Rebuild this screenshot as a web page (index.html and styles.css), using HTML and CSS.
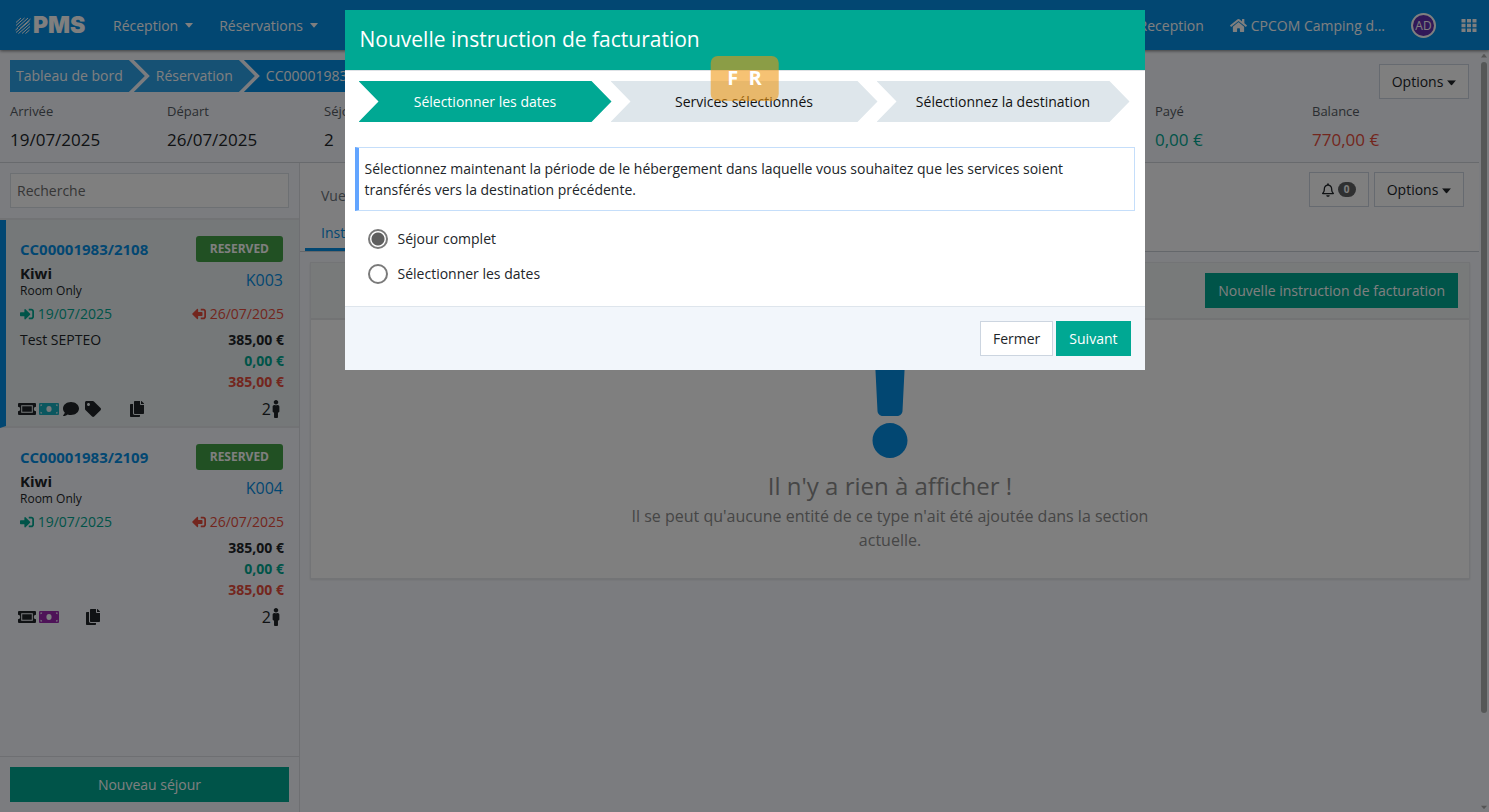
FILE: index.html
```html
<!DOCTYPE html>
<html lang="fr">
<head>
  <meta charset="UTF-8">
  <title>PMS - Instructions de facturation</title>
  <link rel="stylesheet" href="styles.css">
</head>
<body>
  <!-- icons -->
  <svg class="sprite" aria-hidden="true">
    <symbol id="i-home" viewBox="0 0 576 512"><path d="M280.370 148.260L96 300.110V464a16 16 0 0 0 16 16l112.060-.29a16 16 0 0 0 15.920-16V368a16 16 0 0 1 16-16h64a16 16 0 0 1 16 16v95.640a16 16 0 0 0 16 16.050L464 480a16 16 0 0 0 16-16V300L295.670 148.260a12.190 12.190 0 0 0-15.300 0zM571.600 251.470L488 182.560V44.050a12 12 0 0 0-12-12h-56a12 12 0 0 0-12 12v72.610L318.470 43a48 48 0 0 0-61 0L4.340 251.470a12 12 0 0 0-1.600 16.900l25.500 31A12 12 0 0 0 45.150 301l235.220-193.740a12.190 12.190 0 0 1 15.300 0L530.900 301a12 12 0 0 0 16.900-1.600l25.500-31a12 12 0 0 0-1.700-16.930z"/></symbol>
    <symbol id="i-grid" viewBox="0 0 15 13"><path d="M0 0h4v3.500H0zM5.500 0h4v3.500h-4zM11 0h4v3.500h-4zM0 4.700h4v3.500H0zM5.500 4.700h4v3.500h-4zM11 4.700h4v3.500h-4zM0 9.500h4V13H0zM5.500 9.500h4V13h-4zM11 9.500h4V13h-4z"/></symbol>
    <symbol id="i-caret" viewBox="0 0 8 5"><path d="M0 0h8L4.500 4.300q-.5.500-1 0z"/></symbol>
    <symbol id="i-bell" viewBox="0 0 448 512"><path d="M439.390 362.290c-19.320-20.760-55.470-51.990-55.470-154.290 0-77.700-54.480-139.900-127.940-155.160V32c0-17.670-14.320-32-31.980-32s-31.980 14.330-31.980 32v20.840C118.560 68.100 64.080 130.300 64.080 208c0 102.300-36.150 133.530-55.470 154.290-6 6.450-8.660 14.160-8.610 21.710.11 16.400 12.980 32 32.100 32h383.800c19.120 0 32-15.600 32.100-32 .05-7.550-2.610-15.270-8.610-21.710zM67.530 368c21.220-27.970 44.420-74.330 44.530-159.420 0-.2-.06-.38-.06-.58 0-61.860 50.140-112 112-112s112 50.140 112 112c0 .2-.06.38-.06.58.11 85.100 23.310 131.460 44.530 159.420H67.530zM224 512c35.320 0 63.970-28.650 63.970-64H160.030c0 35.350 28.650 64 63.970 64z"/></symbol>
    <symbol id="i-in" viewBox="0 0 512 512"><path d="M416 448h-84c-6.600 0-12-5.400-12-12v-40c0-6.600 5.400-12 12-12h84c17.700 0 32-14.300 32-32V160c0-17.700-14.300-32-32-32h-84c-6.600 0-12-5.400-12-12V76c0-6.600 5.400-12 12-12h84c53 0 96 43 96 96v192c0 53-43 96-96 96zm-47-201L201 79c-15-15-41-4.500-41 17v96H24c-13.300 0-24 10.700-24 24v96c0 13.300 10.700 24 24 24h136v96c0 21.500 26 32 41 17l168-168c9.300-9.400 9.300-24.600 0-34z"/></symbol>
    <symbol id="i-out" viewBox="0 0 512 512"><path transform="matrix(-1 0 0 1 512 0)" d="M497 273L329 441c-15 15-41 4.500-41-17v-96H152c-13.300 0-24-10.700-24-24v-96c0-13.300 10.700-24 24-24h136V88c0-21.400 25.900-32 41-17l168 168c9.300 9.400 9.300 24.600 0 34zM192 436v-40c0-6.600-5.400-12-12-12H96c-17.700 0-32-14.300-32-32V160c0-17.700 14.300-32 32-32h84c6.600 0 12-5.400 12-12V76c0-6.600-5.400-12-12-12H96c-53 0-96 43-96 96v192c0 53 43 96 96 96h84c6.600 0 12-5.400 12-12z"/></symbol>
    <symbol id="i-ticket" viewBox="0 0 18 12"><path fill-rule="evenodd" d="M1 0h16q1 0 1 1v2.800a2.200 2.200 0 0 0 0 4.400V11q0 1-1 1H1q-1 0-1-1V8.200a2.200 2.200 0 0 0 0-4.400V1q0-1 1-1zM3.200 2.200v7.600h11.600V2.200zM4.200 3.200h9.600v5.600H4.200z"/></symbol>
    <symbol id="i-money" viewBox="0 0 20 12"><path fill-rule="evenodd" d="M1 0h18q1 0 1 1v10q0 1-1 1H1q-1 0-1-1V1q0-1 1-1zM10 3a2.600 3 0 1 0 0 6a2.600 3 0 1 0 0-6zM1.500 1.500v1.700A2 2 0 0 0 3.200 1.500zM18.500 1.500h-1.700a2 2 0 0 0 1.700 1.700zM1.500 10.500h1.700A2 2 0 0 0 1.500 8.800zM18.500 10.500V8.800a2 2 0 0 0-1.700 1.700z"/></symbol>
    <symbol id="i-comment" viewBox="0 0 512 512"><path d="M256 32C114.600 32 0 125.100 0 240c0 49.600 21.400 95 57 130.700C44.500 421.100 2.700 466 2.200 466.500c-2.200 2.300-2.800 5.700-1.500 8.700S4.800 480 8 480c66.300 0 116-31.800 140.600-51.400 32.700 12.300 69 19.400 107.400 19.400 141.400 0 256-93.100 256-208S397.400 32 256 32z"/></symbol>
    <symbol id="i-tag" viewBox="0 0 512 512"><path d="M0 252.118V48C0 21.490 21.490 0 48 0h204.118a48 48 0 0 1 33.941 14.059l211.882 211.882c18.745 18.745 18.745 49.137 0 67.882L293.823 497.941c-18.745 18.745-49.137 18.745-67.882 0L14.059 286.059A48 48 0 0 1 0 252.118zM112 64c-26.510 0-48 21.490-48 48s21.490 48 48 48 48-21.490 48-48-21.490-48-48-48z"/></symbol>
    <symbol id="i-copy" viewBox="0 0 448 512"><path d="M320 448v40c0 13.255-10.745 24-24 24H24c-13.255 0-24-10.745-24-24V120c0-13.255 10.745-24 24-24h72v296c0 30.879 25.121 56 56 56h168zm0-344V0H152c-13.255 0-24 10.745-24 24v368c0 13.255 10.745 24 24 24h272c13.255 0 24-10.745 24-24V128H344c-13.200 0-24-10.800-24-24zm120.971-31.029L375.029 7.029A24 24 0 0 0 358.059 0H352v96h96v-6.059a24 24 0 0 0-7.029-16.970z"/></symbol>
    <symbol id="i-male" viewBox="0 0 192 512"><path d="M96 0c35.346 0 64 28.654 64 64s-28.654 64-64 64-64-28.654-64-64S60.654 0 96 0m48 144h-11.360c-22.711 10.443-49.590 10.894-73.280 0H48c-26.510 0-48 21.490-48 48v136c0 13.255 10.745 24 24 24h16v136c0 13.255 10.745 24 24 24h64c13.255 0 24-10.745 24-24V352h16c13.255 0 24-10.745 24-24V192c0-26.510-21.490-48-48-48z"/></symbol>
    <symbol id="i-exclamation" viewBox="0 0 192 512"><path d="M176 432c0 44.112-35.888 80-80 80s-80-35.888-80-80 35.888-80 80-80 80 35.888 80 80zM25.260 25.199l13.600 272C39.499 309.972 50.041 320 62.830 320h66.340c12.789 0 23.331-10.028 23.970-22.801l13.600-272C167.425 11.490 156.496 0 142.770 0H49.230C35.504 0 24.575 11.490 25.260 25.199z"/></symbol>
  </svg>

  <div class="app">
    <nav class="navbar">
      <a class="logo" href="#">
        <svg class="logo-mark" viewBox="0 0 16 17"><path d="M1 5.500L6 1M1 8.500L9.500 1M2.500 10.500L13 1M5 11.500L15.500 2M.5 13L3 11M1 15.500L14.500 4M3.500 16.500L15 6.500M7 16.500L15 9.500M10.500 16.500L14.500 13"/></svg>
        <span>PMS</span>
      </a>
      <a class="nav-link" href="#">Réception <svg class="caret"><use href="#i-caret"/></svg></a>
      <a class="nav-link" href="#">Réservations <svg class="caret"><use href="#i-caret"/></svg></a>
      <div class="nav-right">
        <a class="nav-link" href="#">Reception</a>
        <a class="nav-link hotel" href="#"><svg class="home"><use href="#i-home"/></svg>CPCOM Camping d...</a>
        <a class="avatar" href="#">AD</a>
        <a class="apps" href="#" aria-label="Applications"><svg><use href="#i-grid"/></svg></a>
      </div>
    </nav>

    <div class="page">
      <div class="content">
        <header class="summary">
          <div class="summary-top">
            <div class="breadcrumb">
              <a href="#">Tableau de bord</a>
              <a href="#">Réservation</a>
              <a class="current" href="#">CC00001983</a>
            </div>
            <button class="btn btn-default" type="button">Options <svg class="caret" viewBox="0 0 8 5"><use href="#i-caret"/></svg></button>
          </div>
          <div class="stats">
            <div class="stat"><span>Arrivée</span><strong>19/07/2025</strong></div>
            <div class="stat"><span>Départ</span><strong>26/07/2025</strong></div>
            <div class="stat"><span>Séjours</span><strong>2</strong></div>
            <div class="stat push"><span>Payé</span><strong class="green">0,00 €</strong></div>
            <div class="stat"><span>Balance</span><strong class="red">770,00 €</strong></div>
          </div>
        </header>

        <div class="columns">
          <aside class="sidebar">
            <div class="search"><input type="text" placeholder="Recherche" aria-label="Recherche"></div>

            <article class="stay active">
              <div class="row head"><a class="stay-code" href="#">CC00001983/2108</a><span class="status">RESERVED</span></div>
              <div class="row">
                <div><div class="stay-name">Kiwi</div><div class="stay-board">Room Only</div></div>
                <a class="room" href="#">K003</a>
              </div>
              <div class="row dates">
                <span class="green"><svg><use href="#i-in"/></svg> 19/07/2025</span>
                <span class="red"><svg><use href="#i-out"/></svg> 26/07/2025</span>
              </div>
              <div class="row amounts">
                <span>Test SEPTEO</span>
                <div class="prices"><div>385,00 €</div><div class="green">0,00 €</div><div class="red">385,00 €</div></div>
              </div>
              <div class="row foot">
                <div class="icons">
                  <span><svg class="ticket"><use href="#i-ticket"/></svg></span>
                  <span><svg class="money cyan"><use href="#i-money"/></svg></span>
                  <span><svg><use href="#i-comment"/></svg></span>
                  <span><svg><use href="#i-tag"/></svg></span>
                  <span></span>
                  <span><svg><use href="#i-copy"/></svg></span>
                </div>
                <div class="guests">2<svg><use href="#i-male"/></svg></div>
              </div>
            </article>

            <article class="stay">
              <div class="row head"><a class="stay-code" href="#">CC00001983/2109</a><span class="status">RESERVED</span></div>
              <div class="row">
                <div><div class="stay-name">Kiwi</div><div class="stay-board">Room Only</div></div>
                <a class="room" href="#">K004</a>
              </div>
              <div class="row dates">
                <span class="green"><svg><use href="#i-in"/></svg> 19/07/2025</span>
                <span class="red"><svg><use href="#i-out"/></svg> 26/07/2025</span>
              </div>
              <div class="row amounts">
                <span></span>
                <div class="prices"><div>385,00 €</div><div class="green">0,00 €</div><div class="red">385,00 €</div></div>
              </div>
              <div class="row foot">
                <div class="icons">
                  <span><svg class="ticket"><use href="#i-ticket"/></svg></span>
                  <span><svg class="money purple"><use href="#i-money"/></svg></span>
                  <span></span>
                  <span><svg><use href="#i-copy"/></svg></span>
                </div>
                <div class="guests">2<svg><use href="#i-male"/></svg></div>
              </div>
            </article>

            <div class="sidebar-foot"><button class="btn btn-primary" type="button">Nouveau séjour</button></div>
          </aside>

          <main class="main">
            <div class="tabs-bar">
              <div class="tabs">
                <a href="#">Vue</a>
                <a class="selected" href="#">Instructions</a>
              </div>
              <div class="tools">
                <button class="btn btn-default bell" type="button" aria-label="Notifications"><svg><use href="#i-bell"/></svg><span class="count">0</span></button>
                <button class="btn btn-default" type="button">Options <svg class="caret" viewBox="0 0 8 5"><use href="#i-caret"/></svg></button>
              </div>
            </div>
            <section class="panel">
              <div class="panel-head"><button class="btn btn-primary" type="button">Nouvelle instruction de facturation</button></div>
              <div class="empty">
                <svg><use href="#i-exclamation"/></svg>
                <h2>Il n'y a rien à afficher !</h2>
                <p>Il se peut qu'aucune entité de ce type n'ait été ajoutée dans la section actuelle.</p>
              </div>
            </section>
          </main>
        </div>
      </div>
      <div class="scrollbar">
        <svg viewBox="0 0 8 5"><path d="M0 5h8L4.500.700q-.5-.5-1 0z"/></svg>
        <div class="thumb"></div>
        <svg viewBox="0 0 8 5"><path d="M0 0h8L4.500 4.300q-.5.500-1 0z"/></svg>
      </div>
    </div>
  </div>

  <div class="backdrop">
    <div class="modal" role="dialog" aria-labelledby="modal-title">
      <h1 class="modal-head" id="modal-title">Nouvelle instruction de facturation</h1>
      <div class="modal-body">
        <div class="steps">
          <div class="step done">Sélectionner les dates</div>
          <div class="step">Services sélectionnés</div>
          <div class="step">Sélectionnez la destination</div>
        </div>
        <p class="info">Sélectionnez maintenant la période de le hébergement dans laquelle vous souhaitez que les services soient transférés vers la destination précédente.</p>
        <div class="choices">
          <label><input type="radio" name="period" checked> Séjour complet</label>
          <label><input type="radio" name="period"> Sélectionner les dates</label>
        </div>
      </div>
      <div class="modal-foot">
        <button class="btn btn-default" type="button">Fermer</button>
        <button class="btn btn-primary" type="button">Suivant</button>
      </div>
    </div>
    <div class="lang">F  R</div>
  </div>
</body>
</html>
```
FILE: styles.css
```css
* { box-sizing: border-box; }
body {
  margin: 0;
  font-family: "Open Sans", "Noto Sans", sans-serif;
  font-size: 14px;
  line-height: 21px;
  color: #212529;
}
a { text-decoration: none; color: #058ee4; }
svg { fill: currentColor; flex: none; }
button, input { font: inherit; }
.sprite { display: none; }
.green { color: #00a893; }
.red { color: #e74c3c; }
.caret { width: 8px; height: 5px; }

.app { display: flex; flex-direction: column; height: 100vh; }

/* navbar */
.navbar {
  display: flex;
  align-items: center;
  height: 50px;
  padding: 0 12px 0 15px;
  background: #058ee4;
  box-shadow: 0 1px 3px rgba(0,0,0,0.5);
  z-index: 1;
}
.navbar a { color: #fff; }
.logo {
  display: flex;
  align-items: center;
  gap: 2px;
  width: 98px;
  font: 900 23px Inter, sans-serif;
}
.logo-mark { width: 16px; height: 17px; fill: none; stroke: #fff; stroke-width: 1; }
.nav-link { display: flex; align-items: center; gap: 7px; margin-right: 26px; }
.nav-right { display: flex; align-items: center; margin-left: auto; }
.hotel { gap: 4px; }
.home { width: 17px; height: 15px; }
.avatar {
  width: 25px;
  height: 25px;
  border: 2px solid #fff;
  border-radius: 50%;
  background: #6230b0;
  font-size: 12px;
  text-align: center;
}
.apps { display: flex; margin-left: 25px; }
.apps svg { width: 16px; height: 13px; }

/* buttons */
.btn {
  height: 35px;
  padding: 0 12px;
  border: 1px solid #00a893;
  border-radius: 0;
  cursor: pointer;
  white-space: nowrap;
}
.btn .caret { width: 9px; height: 6px; vertical-align: 1px; }
.btn-default { background: #fff; border-color: #ccd5e0; color: #212529; }
.btn-primary { background: #00a893; color: #fff; }

/* page header */
.page { display: flex; flex: 1; min-height: 0; background: #f7f9fe; }
.content { display: flex; flex-direction: column; flex: 1; min-width: 0; }
.summary { height: 113px; padding: 10px 10px 0; border-bottom: 1px solid #d0d4da; }
.summary-top { display: flex; justify-content: space-between; height: 41px; }
.summary-top .btn { margin-top: 4px; }
.breadcrumb { display: flex; height: 32px; line-height: 32px; }
.breadcrumb a {
  margin-left: -11px;
  padding: 0 22px;
  background: #2ca2e9;
  color: #fff;
  clip-path: polygon(0 0, calc(100% - 16px) 0, 100% 50%, calc(100% - 16px) 100%, 0 100%, 16px 50%);
}
.breadcrumb a:first-child {
  margin-left: 0;
  padding-left: 6px;
  clip-path: polygon(0 0, calc(100% - 16px) 0, 100% 50%, calc(100% - 16px) 100%, 0 100%);
}
.breadcrumb .current { background: #058ee4; }
.stats { display: flex; }
.stat { display: flex; flex-direction: column; width: 157px; }
.stat span { font-size: 13px; color: #555b63; }
.stat strong { font-size: 17px; font-weight: normal; line-height: 36px; }
.push { margin-left: auto; }

/* sidebar */
.columns { display: flex; flex: 1; min-height: 0; }
.sidebar {
  display: flex;
  flex-direction: column;
  width: 300px;
  border-right: 1px solid #dcdfe4;
}
.search { padding: 10px; border-bottom: 2px solid #e4e6ea; }
.search input {
  display: block;
  width: 100%;
  height: 35px;
  padding: 0 6px;
  border: 1px solid #dbe0e6;
  background: #fff;
}
.search input::placeholder { color: #6c6c6c; }
.stay {
  padding: 16px 15px 7px 14px;
  border-left: 6px solid transparent;
  border-bottom: 2px solid #e4e6ea;
}
.stay:last-of-type { border-bottom: 0; }
.stay.active { border-left-color: #058ee4; background: #eaf1f2; }
.row { display: flex; justify-content: space-between; }
.head { align-items: center; height: 26px; }
.stay-code { font-size: 15px; font-weight: bold; }
.status {
  padding: 0 14px;
  border-radius: 3px;
  background: #43a047;
  color: #fff;
  font-size: 12px;
  font-weight: bold;
  line-height: 26px;
  margin-right: 1px;
}
.stay-name { font-size: 15px; font-weight: bold; line-height: 22px; }
.stay-board { font-size: 12px; line-height: 14px; }
.room { font-size: 16px; line-height: 36px; margin-right: 1px; }
.dates { margin-top: 5px; }
.dates svg { width: 14px; height: 14px; vertical-align: -2px; }
.amounts { margin-top: 5px; }
.prices { font-weight: bold; text-align: right; }
.foot { align-items: center; height: 20px; margin-top: 7px; }
.icons { display: flex; margin-left: -4px; }
.icons span { display: flex; justify-content: center; width: 22px; }
.icons svg { width: 16px; height: 16px; }
.icons .ticket { width: 18px; height: 16px; }
.icons .money { width: 20px; height: 16px; }
.cyan { color: #17aebf; }
.purple { color: #9c27b0; }
.guests { display: flex; align-items: center; font-size: 16px; margin-right: 3px; }
.guests svg { width: 10px; height: 18px; }
.sidebar-foot { margin-top: auto; padding: 10px; border-top: 1px solid #dcdfe4; }
.sidebar-foot .btn { width: 100%; }

/* main column */
.main { flex: 1; min-width: 0; }
.tabs-bar {
  display: flex;
  justify-content: space-between;
  height: 89px;
  padding: 9px 15px 0 5px;
  border-bottom: 1px solid #c8ced6;
  background: #fdfdfe;
}
.tabs { display: flex; flex-direction: column; align-items: flex-start; }
.tabs a { padding: 13px 16px 5px; color: #6c757d; height: 40px; }
.tabs .selected { padding-top: 10px; border-bottom: 3px solid #058ee4; color: #058ee4; }
.tools { display: flex; gap: 5px; }
.bell { display: flex; align-items: center; gap: 4px; }
.bell svg { width: 12px; height: 14px; }
.count {
  width: 18px;
  border-radius: 8px;
  background: #5f6163;
  color: #fff;
  font-size: 10px;
  font-weight: bold;
  line-height: 15px;
}
.panel {
  margin: 10px 9px 0 10px;
  border: 1px solid #e6e9ec;
  background: #fff;
  box-shadow: 0 1px 2px rgba(0,0,0,0.1);
}
.panel-head {
  display: flex;
  justify-content: flex-end;
  padding: 10px 11px;
  border-bottom: 2px solid #e4e7e9;
  background: #f0f4f5;
}
.empty { padding: 26px 20px; text-align: center; color: #8c8c8c; }
.empty svg { display: block; width: 42px; height: 112px; margin: 0 auto; color: #058ee4; }
.empty h2 { margin: 13px 0 3px; font-size: 24px; font-weight: normal; line-height: 30px; }
.empty p { max-width: 550px; margin: 0 auto; font-size: 16px; line-height: 24px; }

/* scroll strip */
.scrollbar {
  display: flex;
  flex-direction: column;
  align-items: center;
  width: 10px;
  padding: 3px 0 2px;
  color: #aaa;
}
.scrollbar svg { width: 6px; height: 5px; }
.thumb { width: 6px; flex: 0 0 86%; margin: 4px 0 auto; border-radius: 3px; background: #acafaf; }

/* dialog */
.backdrop {
  position: fixed;
  inset: 0;
  padding-top: 10px;
  background: rgba(0,0,0,0.5);
  z-index: 10;
}
.modal { max-width: 800px; margin: 0 auto; background: #fff; }
.modal-head {
  margin: 0;
  padding: 0 15px 2px;
  background: #00a893;
  color: #fff;
  font-size: 21px;
  font-weight: normal;
  line-height: 58px;
}
.modal-body { padding: 10px 10px 15px; border-top: 1px solid #dee2e6; }
.steps { display: grid; grid-template-columns: 253px 1fr 253px; margin: 0 5px 25px 4px; }
.step {
  background: #dee6eb;
  color: #111;
  line-height: 41px;
  text-align: center;
  clip-path: polygon(0 0, calc(100% - 20px) 0, 100% 50%, calc(100% - 20px) 100%, 0 100%, 20px 50%);
}
.step:nth-child(2) { margin: 0 -1px; }
.step.done { background: #00a893; color: #fff; }
.info {
  margin: 0;
  padding: 10px 6px;
  border: 1px solid #c5defa;
  border-left: 4px solid #62a5ff;
}
.choices { padding: 10px 13px 0; }
.choices label { display: flex; align-items: center; gap: 10px; height: 35px; }
.choices input {
  appearance: none;
  width: 20px;
  height: 20px;
  margin: 0;
  border: 2px solid #7a7a7a;
  border-radius: 50%;
}
.choices input:checked { background: radial-gradient(circle, #5f5f5f 6px, #fff 7px); }
.modal-foot {
  display: flex;
  justify-content: flex-end;
  gap: 3px;
  padding: 14px;
  border-top: 1px solid #dee5ec;
  background: #f2f6fb;
}
.lang {
  position: absolute;
  top: 56px;
  left: 50%;
  transform: translateX(-50%);
  padding: 0 17px 2px;
  border-radius: 7px;
  background: rgba(240,150,14,0.58);
  color: #fff;
  font-size: 20px;
  font-weight: bold;
  line-height: 43px;
  white-space: pre;
}
```
